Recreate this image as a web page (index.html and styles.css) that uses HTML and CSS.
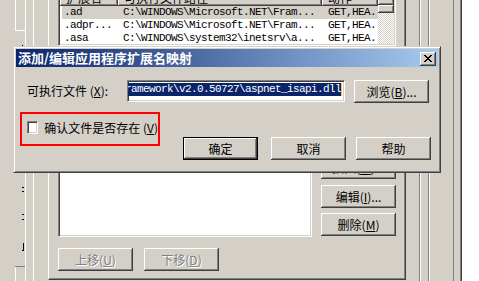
FILE: index.html
```html
<!DOCTYPE html>
<html lang="zh-CN">
<head>
    <meta charset="UTF-8">
    <title>添加/编辑应用程序扩展名映射</title>
    <link rel="stylesheet" href="styles.css">
</head>
<body>
    <div class="desktop">
        <!-- 后面的窗口片段 -->
        <div class="side-box">
            <svg width="10" height="237" viewBox="0 0 10 237" shape-rendering="crispEdges">
                <path fill="#000" d="M7 14h1v1H7z M7 156h2v1H7z M7 160h2v1H7z M7 183h2v1H7z M7 188h2v1H7z M8 212h1v8H8z M7 219h1v1H7z"/>
            </svg>
        </div>

        <div class="page">
            <div class="ext-list">
                <div class="ext-table">
                    <div class="ext-head">
                        <span class="h1">扩展名</span>
                        <span class="h2">可执行文件路径</span>
                        <span class="h3">动作</span>
                    </div>
                    <div class="ext-row sel">
                        <span class="c1">.ad</span>
                        <span class="c2">C:\WINDOWS\Microsoft.NET\Fram...</span>
                        <span class="c3">GET,HEA..</span>
                    </div>
                    <div class="ext-row">
                        <span class="c1">.adpr...</span>
                        <span class="c2">C:\WINDOWS\Microsoft.NET\Fram...</span>
                        <span class="c3">GET,HEA..</span>
                    </div>
                    <div class="ext-row">
                        <span class="c1">.asa</span>
                        <span class="c2">C:\WINDOWS\system32\inetsrv\a...</span>
                        <span class="c3">GET,HEA..</span>
                    </div>
                </div>
                <div class="vscroll">
                    <div class="sb-btn"></div>
                    <div class="sb-thumb"></div>
                </div>
            </div>

            <div class="wild">
                <div class="wild-list"></div>
                <div class="wild-btns">
                    <button class="btn b-insert">插入(<u>W</u>)...</button>
                    <button class="btn b-edit">编辑(<u>I</u>)...</button>
                    <button class="btn b-del">删除(<u>M</u>)</button>
                </div>
            </div>

            <div class="move-btns">
                <button class="btn" disabled>上移(<u>U</u>)</button>
                <button class="btn" disabled>下移(<u>D</u>)</button>
            </div>
        </div>

        <!-- 对话框 -->
        <div class="dialog">
            <div class="titlebar">
                <span class="title">添加/编辑应用程序扩展名映射</span>
                <span class="close">
                    <svg width="8" height="7" viewBox="0 0 8 7" shape-rendering="crispEdges">
                        <path fill="#000" d="M0 0h2v1H0z M6 0h2v1H6z M1 1h2v1H1z M5 1h2v1H5z M2 2h4v1H2z M3 3h2v1H3z M2 4h4v1H2z M1 5h2v1H1z M5 5h2v1H5z M0 6h2v1H0z M6 6h2v1H6z"/>
                    </svg>
                </span>
            </div>

            <div class="row-exe">
                <span class="label">可执行文件 (<u>X</u>):</span>
                <div class="field">
                    <span class="sel-text">ramework\v2.0.50727\aspnet_isapi.dll</span>
                    <span class="caret"></span>
                </div>
                <button class="btn b-browse">浏览(<u>B</u>)...</button>
            </div>

            <div class="row-check">
                <div class="mark">
                    <span class="checkbox"></span>
                    <span class="check-label">确认文件是否存在 (<u>V</u>)</span>
                </div>
                <div class="actions">
                    <button class="btn default">确定</button>
                    <button class="btn b-cancel">取消</button>
                    <button class="btn b-help">帮助</button>
                </div>
            </div>
        </div>
    </div>
</body>
</html>
```

FILE: styles.css
```css
html, body {
    margin: 0;
    padding: 0;
}
body {
    font-family: "Noto Sans CJK SC", "Liberation Sans", sans-serif;
    font-size: 12px;
    color: #000;
    background: #fff;
}
u {
    text-decoration: underline;
    text-underline-offset: 1px;
}
.desktop {
    position: relative;
    width: 479px;
    height: 281px;
    overflow: hidden;
    background: linear-gradient(to right,
        #d4d0c8 0 15px, #fff 15px 16px,
        #d4d0c8 16px 25px, #fff 25px 26px,
        #d4d0c8 26px 33px, #fff 33px 34px,
        #d4d0c8 34px 419px, #808080 419px 420px, #fff 420px 421px,
        #d4d0c8 421px 428px, #808080 428px 429px, #fff 429px 430px,
        #d4d0c8 430px 453px, #808080 453px 454px,
        #d4d0c8 454px 460px, #808080 460px 461px, #404040 461px 462px,
        #fff 462px);
}

/* 经典按钮 */
.btn {
    box-sizing: border-box;
    width: 75px;
    height: 23px;
    padding: 0;
    border: none;
    background: #d4d0c8;
    font-family: "Noto Sans CJK SC", sans-serif;
    font-size: 12px;
    line-height: 21px;
    color: #000;
    box-shadow: inset -1px -1px #404040, inset 1px 1px #fff, inset -2px -2px #808080;
}
.btn.default {
    box-shadow: inset 0 0 0 1px #000, inset -2px -2px #404040, inset 2px 2px #fff, inset -3px -3px #808080;
}
.btn:disabled {
    color: #808080;
    text-shadow: 1px 1px #fff;
}

/* 背景窗口 */
.side-box {
    position: absolute;
    left: 15px;
    top: 30px;
    width: 10px;
    height: 237px;
    box-sizing: border-box;
    border-top: 1px solid #fff;
    border-bottom: 1px solid #808080;
    background: #d4d0c8;
}
.side-box svg {
    display: block;
}
.page {
    position: absolute;
    left: 48px;
    top: 0;
    width: 358px;
    height: 280px;
    box-sizing: border-box;
    padding-left: 9px;
    border-left: 1px solid #fff;
    border-right: 1px solid #404040;
    border-bottom: 1px solid #404040;
    box-shadow: inset -1px -1px #808080;
    display: flex;
    flex-direction: column;
}
.ext-list {
    margin-top: -13px;
    width: 338px;
    height: 59px;
    box-sizing: border-box;
    border: 1px solid;
    border-color: #808080 #fff #fff #808080;
    padding: 1px;
    background: #fff;
    box-shadow: inset 1px 1px #404040, inset -1px -1px #d4d0c8;
    display: flex;
    overflow: hidden;
}
.ext-table {
    width: 318px;
}
.ext-head {
    display: flex;
    height: 17px;
    line-height: 17px;
}
.ext-head span {
    box-sizing: border-box;
    padding-left: 6px;
    background: #d4d0c8;
    box-shadow: inset -1px -1px #404040, inset 1px 1px #fff, inset -2px -2px #808080;
    white-space: nowrap;
    overflow: hidden;
}
.h1 { width: 58px; }
.h2 { width: 204px; }
.h3 { width: 56px; }
.ext-row {
    display: flex;
    margin-left: 2px;
    height: 13px;
    line-height: 13px;
    font-family: "Liberation Mono", monospace;
    font-size: 11px;
    letter-spacing: -0.6px;
    white-space: nowrap;
}
.ext-row.sel {
    background: #d4d0c8;
}
.c1 { width: 56px; padding-left: 2px; box-sizing: border-box; }
.c2 { width: 204px; padding-left: 5px; box-sizing: border-box; }
.c3 { width: 56px; padding-left: 6px; box-sizing: border-box; }
.vscroll {
    width: 16px;
    background: repeating-conic-gradient(#d4d0c8 0 25%, #fff 0 50%) 0 0 / 2px 2px;
}
.sb-btn, .sb-thumb {
    background: #d4d0c8;
    box-shadow: inset -1px -1px #404040, inset 1px 1px #fff, inset -2px -2px #808080;
}
.sb-btn { height: 16px; }
.sb-thumb { height: 8px; }

.wild {
    display: flex;
    margin-top: 104px;
    height: 87px;
}
.wild-list {
    width: 254px;
    height: 87px;
    box-sizing: border-box;
    border: 1px solid;
    border-color: #808080 #fff #fff #808080;
    background: #fff;
    box-shadow: inset 1px 1px #404040, inset -1px -1px #d4d0c8;
}
.wild-btns {
    display: flex;
    flex-direction: column;
    margin-left: 9px;
}
.b-insert { margin-top: 6px; }
.b-edit { margin-top: 6px; }
.b-del { margin-top: 5px; }
.move-btns {
    display: flex;
    gap: 11px;
    margin-top: 11px;
}

/* 对话框 */
.dialog {
    position: absolute;
    left: 13px;
    top: 46px;
    width: 428px;
    height: 127px;
    box-sizing: border-box;
    border: 1px solid;
    border-color: #d4d0c8 #404040 #404040 #d4d0c8;
    padding: 2px;
    background: #d4d0c8;
    box-shadow: inset 1px 1px #fff, inset -1px -1px #808080;
}
.titlebar {
    display: flex;
    justify-content: space-between;
    align-items: flex-start;
    height: 18px;
    padding: 0 2px;
    background: linear-gradient(to right, #0a246a, #a6caf0);
}
.title {
    color: #fff;
    font-weight: bold;
    font-size: 13px;
    line-height: 18px;
}
.close {
    display: flex;
    align-items: center;
    justify-content: center;
    width: 16px;
    height: 14px;
    margin-top: 3px;
    background: #d4d0c8;
    box-shadow: inset -1px -1px #404040, inset 1px 1px #fff, inset -2px -2px #808080;
}
.close svg {
    margin-top: -1px;
}
.row-exe {
    display: flex;
    align-items: flex-start;
    margin-top: 13px;
    padding-left: 11px;
}
.label {
    width: 100px;
    line-height: 22px;
    white-space: nowrap;
}
.field {
    display: flex;
    justify-content: flex-end;
    align-items: flex-start;
    width: 218px;
    height: 22px;
    box-sizing: border-box;
    border: 1px solid;
    border-color: #808080 #fff #fff #808080;
    padding: 1px 2px 0 0;
    background: #fff;
    box-shadow: inset 1px 1px #404040, inset -1px -1px #d4d0c8;
    overflow: hidden;
}
.sel-text {
    flex-shrink: 0;
    margin-top: 1px;
    background: #0a246a;
    color: #fff;
    font-family: "Liberation Mono", monospace;
    font-size: 11px;
    letter-spacing: -0.6px;
    line-height: 13px;
    white-space: nowrap;
}
.caret {
    flex-shrink: 0;
    width: 1px;
    height: 13px;
    margin-top: 1px;
    background: #f0c050;
}
.b-browse {
    margin-left: 9px;
}
.row-check {
    display: flex;
    height: 48px;
    margin-top: 9px;
    padding-left: 4px;
}
.mark {
    display: flex;
    align-items: flex-start;
    width: 140px;
    height: 34px;
    box-sizing: border-box;
    border: 2px solid #f00;
    padding: 7px 0 0 5px;
}
.checkbox {
    width: 13px;
    height: 13px;
    box-sizing: border-box;
    border: 1px solid;
    border-color: #808080 #fff #fff #808080;
    background: #fff;
    box-shadow: inset 1px 1px #404040, inset -1px -1px #d4d0c8;
}
.check-label {
    margin-left: 6px;
    line-height: 13px;
    white-space: nowrap;
}
.actions {
    display: flex;
    align-self: flex-end;
    margin-left: 23px;
}
.b-cancel { margin-left: 13px; }
.b-help { margin-left: 10px; }
```
